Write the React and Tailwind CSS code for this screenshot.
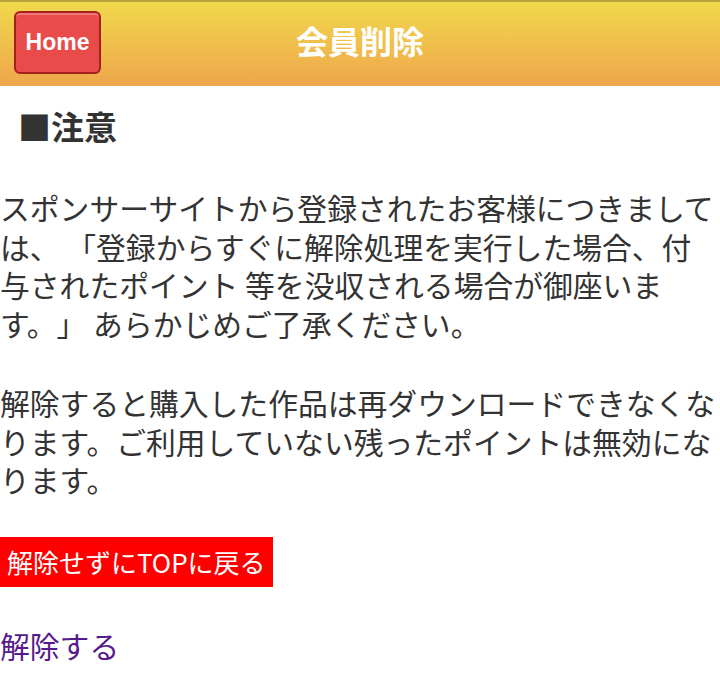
export default function App() {
  return (
    <div className="w-[720px] min-h-[695px] bg-white text-[#333] font-['Noto_Sans_CJK_JP','Noto_Sans',sans-serif] [text-spacing-trim:space-all]">
      <header className="relative h-[86px] border-t-2 border-[#b9a43c] bg-gradient-to-b from-[#f0d84b] to-[#eea64c] flex items-center justify-center">
        <button className="absolute left-[14px] top-[9px] w-[87px] h-[63px] rounded-[6px] border-2 border-[#a3201f] bg-[#e94b4b] shadow-[inset_0_2px_0_rgba(255,255,255,0.25)] text-white font-bold text-[23px] font-['Liberation_Sans',Arial,sans-serif]">
          Home
        </button>
        <h1 className="text-white font-bold text-[32px] leading-none -mt-[8px]">会員削除</h1>
      </header>

      <main>
        <h2 className="mt-[20px] pl-[18px] text-[33px] leading-[40px] font-bold text-[#333]">■注意</h2>

        <p className="mt-[42px] text-[29.8px] leading-[38.5px]">
          スポンサーサイトから登録されたお客様につきましては、 「登録からすぐに解除処理を実行した場合、付与されたポイント 等を没収される場合が御座います。」 あらかじめご了承ください。
        </p>

        <p className="mt-[41px] text-[29.8px] leading-[38.5px]">
          解除すると購入した作品は再ダウンロードできなくなります。ご利用していない残ったポイントは無効になります。
        </p>

        <div className="mt-[38px]">
          <a href="#" className="inline-flex items-center h-[50px] px-[7px] bg-[#ff0000] text-white text-[26px]">
            解除せずにTOPに戻る
          </a>
        </div>

        <div className="mt-[39px]">
          <a href="#" className="text-[29.8px] leading-[38.5px] text-[#551a8b]">解除する</a>
        </div>
      </main>
    </div>
  );
}
